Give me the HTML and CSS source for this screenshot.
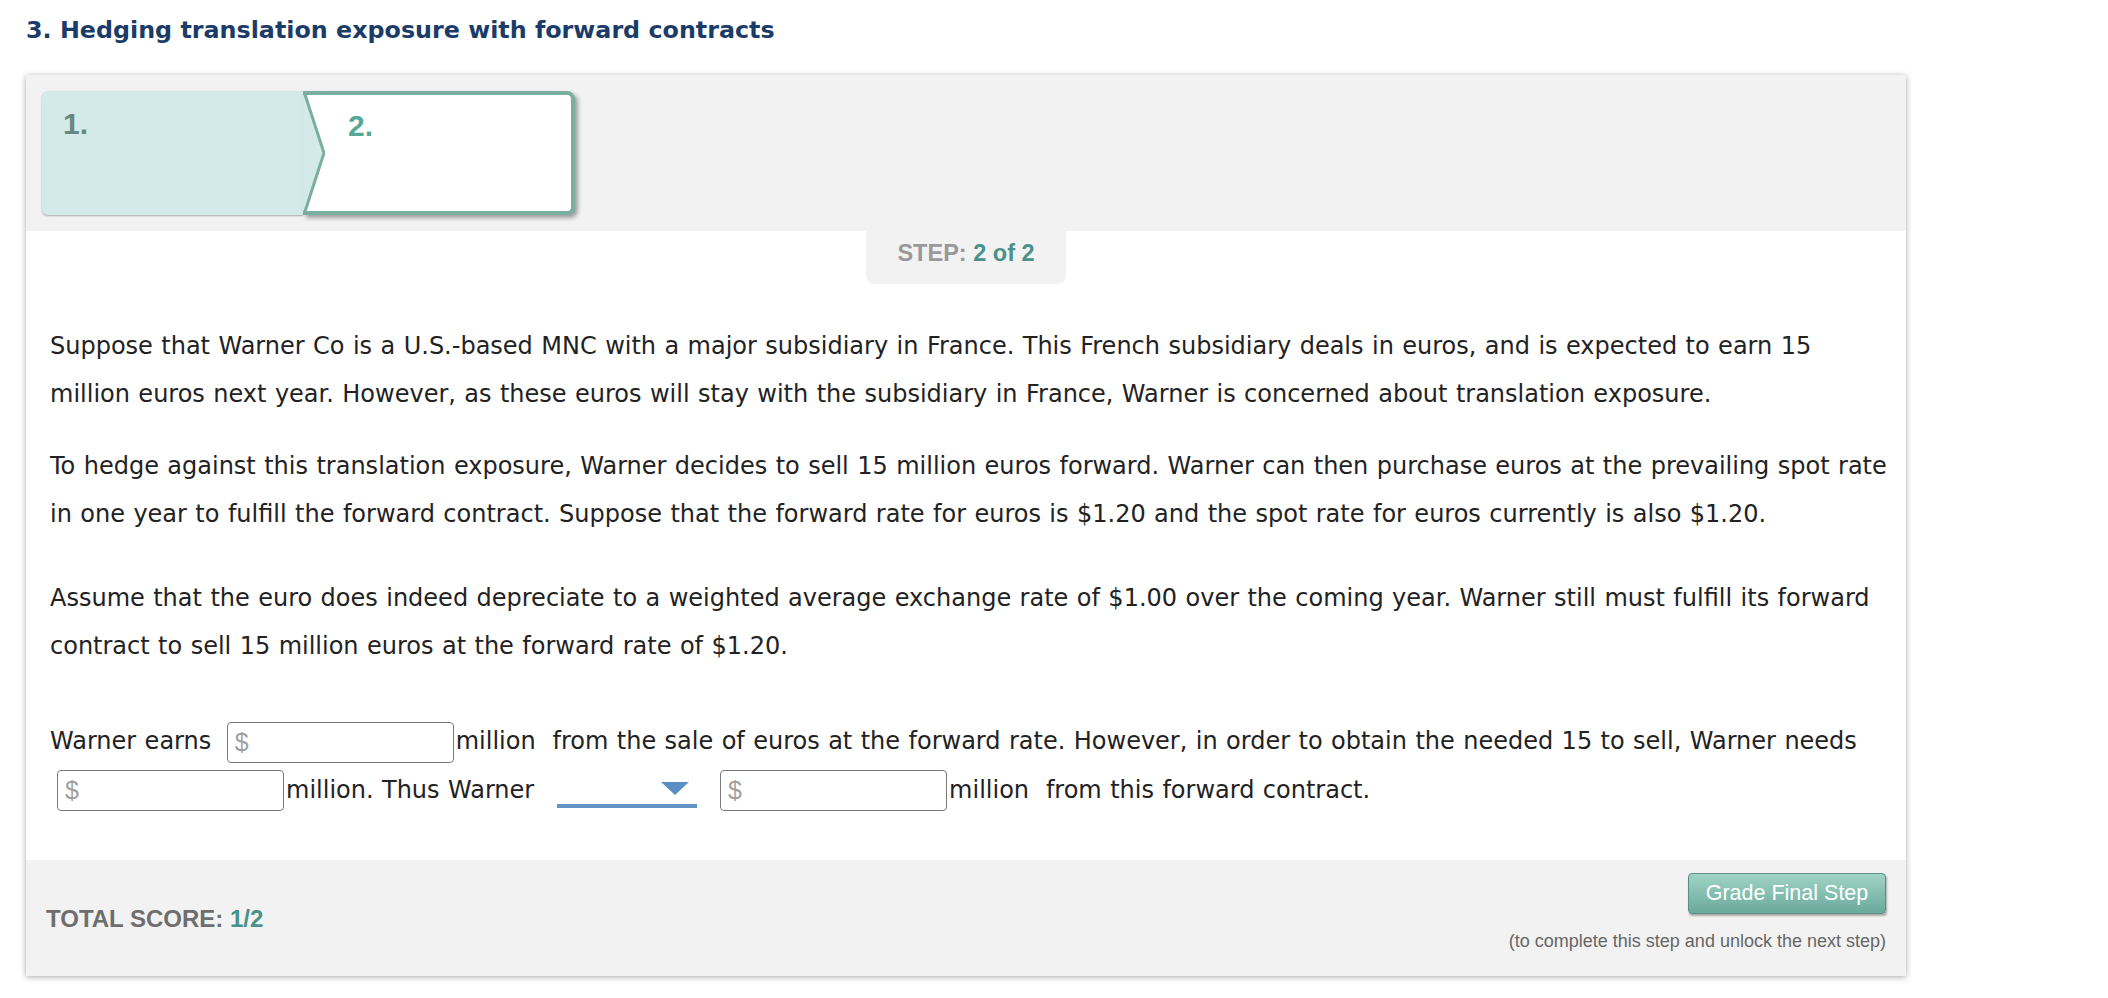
FILE: index.html
```html
<!DOCTYPE html>
<html lang="en">
<head>
<meta charset="utf-8">
<title>Hedging translation exposure with forward contracts</title>
<link rel="stylesheet" href="styles.css">
</head>
<body>
<h1 class="title">3. Hedging translation exposure with forward contracts</h1>
<div class="card">
  <div class="card-head">
    <div class="tabs">
      <div class="tab tab-done"><span class="tab-num">1.</span></div>
      <div class="tab tab-active">
        <svg class="chev" width="22" height="116" viewBox="0 0 22 116" aria-hidden="true">
          <polygon points="0,0 1.5,0 21,58 1.5,116 0,116" fill="#d4eae8"/>
          <polyline points="1.5,-2 21,58 1.5,118" fill="none" stroke="#7aaf9f" stroke-width="3"/>
        </svg>
        <span class="tab-num">2.</span>
      </div>
    </div>
  </div>
  <div class="card-body">
    <div class="step-badge">STEP: <span class="teal">2 of 2</span></div>
    <p class="para">Suppose that Warner Co is a U.S.-based MNC with a major subsidiary in France. This French subsidiary deals in euros, and is expected to earn 15 million euros next year. However, as these euros will stay with the subsidiary in France, Warner is concerned about translation exposure.</p>
    <p class="para p2">To hedge against this translation exposure, Warner decides to sell 15 million euros forward. Warner can then purchase euros at the prevailing spot rate in one year to fulfill the forward contract. Suppose that the forward rate for euros is $1.20 and the spot rate for euros currently is also $1.20.</p>
    <p class="para p3">Assume that the euro does indeed depreciate to a weighted average exchange rate of $1.00 over the coming year. Warner still must fulfill its forward contract to sell 15 million euros at the forward rate of $1.20.</p>
    <p class="para answer">Warner earns <span class="money"><span class="dollar">$</span></span>million&nbsp; from the sale of euros at the forward rate. However, in order to obtain the needed 15 to sell, Warner needs <span class="money"><span class="dollar">$</span></span>million. Thus Warner <span class="select"><svg class="caret" width="28" height="13" viewBox="0 0 28 13" aria-hidden="true"><polygon points="0,0 28,0 14,13" fill="#5b8ec4"/></svg></span> <span class="money"><span class="dollar">$</span></span>million&nbsp; from this forward contract.</p>
  </div>
  <div class="card-foot">
    <div class="score">TOTAL SCORE: <span class="teal">1/2</span></div>
    <div class="grade">
      <button class="grade-btn" type="button">Grade Final Step</button>
      <div class="grade-note">(to complete this step and unlock the next step)</div>
    </div>
  </div>
</div>
</body>
</html>
```

FILE: styles.css
```css
html, body {
  margin: 0;
  padding: 0;
  background: #ffffff;
}

body {
  padding: 16px 0 40px 26px;
  font-family: "DejaVu Sans", Verdana, sans-serif;
}

.title {
  margin: 0;
  font-family: "DejaVu Sans", Verdana, sans-serif;
  font-weight: bold;
  font-size: 23.8px;
  line-height: 28px;
  color: #1b3c68;
}

.card {
  margin-top: 31px;
  width: 1880px;
  background: #ffffff;
  box-shadow: 0 1px 6px rgba(0, 0, 0, 0.35);
}

.card-head {
  background: #f2f2f2;
  height: 156px;
  padding: 16px 0 0 16px;
  box-sizing: border-box;
}

.tabs {
  display: flex;
  height: 124px;
}

.tab {
  box-sizing: border-box;
  height: 124px;
  font-family: "Liberation Sans", Arial, sans-serif;
  font-weight: bold;
  font-size: 30px;
  line-height: 34px;
}

.tab-done {
  width: 261px;
  background: #d4eae8;
  border-radius: 6px 0 0 6px;
  padding: 16px 0 0 21px;
  color: #678781;
  box-shadow: 0 1px 2px rgba(0, 0, 0, 0.3);
}

.tab-active {
  width: 272px;
  display: flex;
  align-items: flex-start;
  background: #ffffff;
  border: 4px solid #7aaf9f;
  border-left: none;
  border-radius: 0 8px 8px 0;
  color: #55a898;
  box-shadow: 3px 3px 4px rgba(0, 0, 0, 0.35);
}

.chev {
  display: block;
  flex: none;
}

.tab-active .tab-num {
  padding: 14px 0 0 23px;
}

.card-body {
  padding: 0 24px 46px 24px;
  font-size: 24px;
  line-height: 48.4px;
  word-spacing: 0.8px;
  color: #222222;
}

.step-badge {
  width: 200px;
  height: 53px;
  box-sizing: border-box;
  margin: 0 auto 38px;
  padding-top: 9px;
  background: #f2f2f2;
  border-radius: 0 0 8px 8px;
  text-align: center;
  font-family: "Liberation Sans", Arial, sans-serif;
  font-weight: bold;
  font-size: 23.5px;
  line-height: 27px;
  word-spacing: 0;
  color: #999999;
}

.teal {
  color: #4a918a;
}

.para {
  margin: 0 -10px 0 0;
}

.p2 {
  margin-top: 23px;
}

.p3 {
  margin-top: 35px;
}

.answer {
  margin-top: 47px;
}

.money {
  display: inline-block;
  box-sizing: border-box;
  width: 227px;
  height: 41px;
  margin: 0 2px 0 7px;
  padding: 0 0 0 7px;
  border: 1.5px solid #7a7a7a;
  border-radius: 4px;
  vertical-align: middle;
  background: #ffffff;
  font-family: "Liberation Sans", Arial, sans-serif;
  font-size: 25px;
  line-height: 38px;
  color: #a0a0a0;
  text-align: left;
}

.select {
  display: inline-flex;
  box-sizing: border-box;
  width: 140px;
  height: 34px;
  margin: 0 8px 0 14px;
  padding-right: 8px;
  justify-content: flex-end;
  align-items: center;
  border-bottom: 4px solid #6494c6;
  vertical-align: middle;
}

.caret {
  display: block;
}

.card-foot {
  display: flex;
  justify-content: space-between;
  align-items: flex-start;
  height: 116px;
  box-sizing: border-box;
  padding: 13px 20px 0 20px;
  background: #f2f2f2;
  font-family: "Liberation Sans", Arial, sans-serif;
}

.score {
  align-self: center;
  margin-top: -13px;
  font-weight: bold;
  font-size: 24px;
  line-height: 27px;
  color: #6e6e6e;
}

.grade {
  display: flex;
  flex-direction: column;
  align-items: flex-end;
}

.grade-btn {
  box-sizing: border-box;
  width: 198px;
  height: 41px;
  padding: 0;
  border: 1px solid #5b8e84;
  border-radius: 4px;
  background: linear-gradient(#a0d4c3, #6aa99d);
  box-shadow: 1px 2px 2px rgba(0, 0, 0, 0.3);
  color: #ffffff;
  font-family: "Liberation Sans", Arial, sans-serif;
  font-size: 21.5px;
  line-height: 39px;
  text-align: center;
}

.grade-note {
  margin-top: 17px;
  font-size: 18px;
  line-height: 20px;
  color: #666666;
}
```
